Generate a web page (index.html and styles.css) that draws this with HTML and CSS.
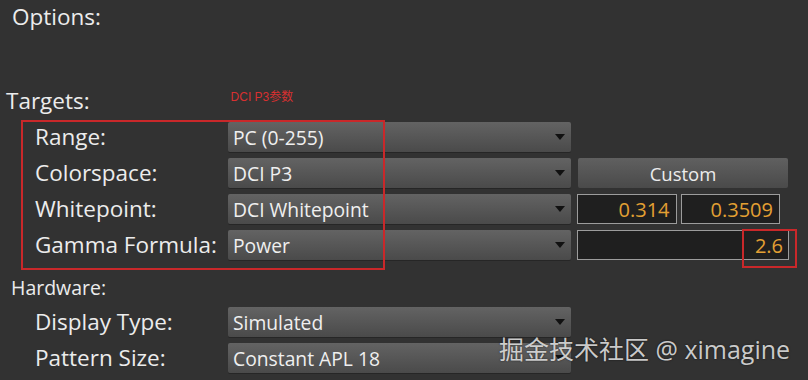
FILE: index.html
```html
<!DOCTYPE html>
<html>
<head>
<meta charset="utf-8">
<link rel="stylesheet" href="styles.css">
</head>
<body>
<div class="page">
  <div class="title">Options:</div>
  <div class="targets-head">
    <span class="section">Targets:</span>
    <span class="note">DCI P3参数</span>
  </div>
  <div class="grid targets">
    <div class="label">Range:</div>
    <div class="dropdown"><span>PC (0-255)</span><i class="arrow"></i></div>
    <div class="empty"></div>

    <div class="label">Colorspace:</div>
    <div class="dropdown"><span>DCI P3</span><i class="arrow"></i></div>
    <div class="button">Custom</div>

    <div class="label">Whitepoint:</div>
    <div class="dropdown"><span>DCI Whitepoint</span><i class="arrow"></i></div>
    <div class="pair">
      <div class="field">0.314</div>
      <div class="field">0.3509</div>
    </div>

    <div class="label">Gamma Formula:</div>
    <div class="dropdown"><span>Power</span><i class="arrow"></i></div>
    <div class="field wide">2.6<b class="mark small"></b></div>

    <b class="mark big"></b>
  </div>
  <div class="hw">Hardware:</div>
  <div class="grid hardware">
    <div class="label">Display Type:</div>
    <div class="dropdown"><span>Simulated</span><i class="arrow"></i></div>
    <div class="empty"></div>
    <div class="label">Pattern Size:</div>
    <div class="dropdown"><span>Constant APL 18</span><i class="arrow"></i></div>
    <div class="empty"></div>
  </div>
  <div class="watermark">掘金技术社区 @ ximagine</div>
</div>
</body>
</html>
```
FILE: styles.css
```css
html, body {
  margin: 0;
  padding: 0;
  background: #323232;
  width: 808px;
  height: 380px;
  overflow: hidden;
}
.page {
  position: relative;
  width: 808px;
  height: 380px;
  font-family: "Open Sans", "Noto Sans", sans-serif;
  color: #ececec;
}
.title {
  font-size: 22.5px;
  line-height: 26px;
  padding: 4px 0 0 12px;
}
.targets-head {
  display: flex;
  align-items: flex-start;
  margin-top: 58px;
  height: 34px;
}
.section {
  font-size: 22.5px;
  line-height: 26px;
  padding-left: 6px;
}
.note {
  font-size: 12px;
  line-height: 14px;
  color: #d83030;
  margin-left: 141px;
  margin-top: 2px;
  font-family: "Liberation Sans", "Noto Sans CJK SC", sans-serif;
}
.grid {
  position: relative;
  display: grid;
  grid-template-columns: 187px 343px 212px;
  column-gap: 6px;
  row-gap: 6px;
  grid-auto-rows: 30px;
  margin-left: 35px;
}
.label {
  font-size: 22.5px;
  line-height: 30px;
  white-space: nowrap;
}
.dropdown {
  display: flex;
  align-items: center;
  justify-content: space-between;
  background: linear-gradient(#636363, #4a4a4a);
  border-radius: 2px;
  box-shadow: 0 1px 0 #262626;
  font-size: 19.3px;
  padding: 0 6px 0 5px;
  color: #efefef;
}
.arrow {
  width: 0;
  height: 0;
  border-left: 5px solid transparent;
  border-right: 5px solid transparent;
  border-top: 6px solid #111;
}
.button {
  margin: 0 1px;
  background: linear-gradient(#606060, #4a4a4a);
  border-radius: 2px;
  display: flex;
  align-items: center;
  justify-content: center;
  font-size: 18.5px;
  color: #ececec;
}
.pair {
  display: flex;
  gap: 4px;
  padding-right: 9px;
}
.field {
  flex: 1;
  background: #1f1f1f;
  border: 1px solid #9c9c9c;
  color: #e3a033;
  font-size: 20px;
  text-align: right;
  padding: 0 6px;
  line-height: 29px;
}
.wide {
  position: relative;
  padding-right: 5px;
}
.mark {
  position: absolute;
  border: 2px solid #c9282a;
}
.mark.small {
  right: -9px;
  top: -2px;
  width: 51px;
  height: 35px;
}
.mark.big {
  left: -14px;
  top: -2px;
  width: 360px;
  height: 146px;
}
.hw {
  font-size: 19.5px;
  line-height: 24px;
  padding: 16px 0 0 11px;
  height: 31px;
}
.watermark {
  position: absolute;
  left: 499px;
  top: 333px;
  font-size: 25px;
  line-height: 32px;
  color: rgba(235, 235, 235, 0.85);
  font-family: "Open Sans", "Noto Sans CJK SC", sans-serif;
  text-shadow: 0 0 2px rgba(0,0,0,0.6);
  white-space: nowrap;
}
```
